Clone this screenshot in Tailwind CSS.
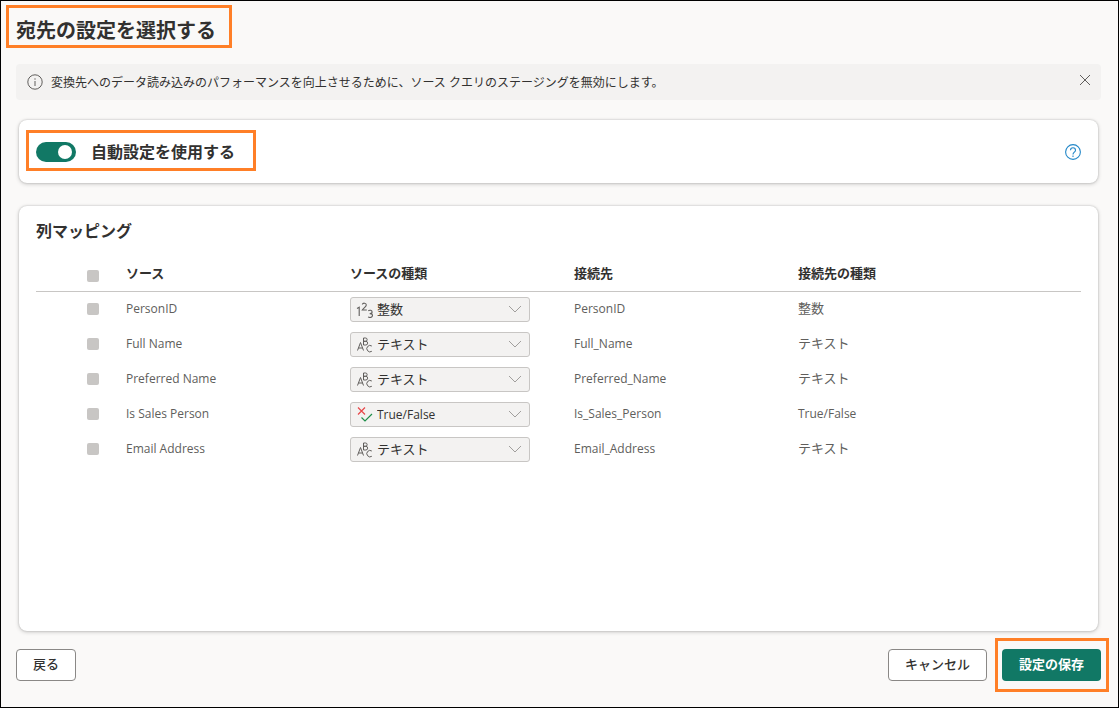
<!DOCTYPE html>
<html lang="ja">
<head>
<meta charset="utf-8">
<meta name="viewport" content="width=device-width, initial-scale=1">
<title>宛先の設定を選択する</title>
<script src="https://cdn.jsdelivr.net/npm/@tailwindcss/browser@4"></script>
</head>
<body class="flex min-h-screen flex-col border border-black bg-[#faf9f8] pr-[17px] pb-[26px] pl-[15px] font-['Open_Sans','Noto_Sans_CJK_JP',sans-serif] text-[13px] text-[#323130]">
<svg class="hidden" aria-hidden="true">
  <symbol id="chevron" viewBox="0 0 14 8"><path d="M1 1 7 7 13 1" fill="none" stroke="#a19f9d" stroke-width="1"/></symbol>
  <symbol id="abc" viewBox="0 0 16 16" fill="none" stroke="#605e5c" stroke-width="1">
    <path d="M.5 13.500 3.500 5.500 6.500 13.500M1.500 11h4M6.500 1v7h2.300a1.800 1.800 0 0 0 0-3.700h-2.300 2a1.600 1.600 0 0 0 0-3.300zM14.800 9a3.200 3.200 0 1 0 0 5.300"/>
  </symbol>
  <symbol id="num" viewBox="0 0 18 16" fill="none" stroke="#605e5c" stroke-width="1.100">
    <path d="M1 6.500 3.200 5.200v8.800M6.300 2.500C6.700.7 10.300.6 10.300 3c0 1.800-2.600 3-4 5h4.500M12.300 8.700c1.300-.9 3.800-.5 3.800 1.200 0 1.200-.9 1.700-2.400 1.700 1.600 0 2.800.5 2.800 1.900 0 2.100-2.800 2.400-4.400 1.400"/>
  </symbol>
  <symbol id="bool" viewBox="0 0 16 16" fill="none" stroke-width="1.200">
    <path d="M1 .5 8 7.500M8 .5 1 7.500" stroke="#e8484a"/><path d="M4.500 10.500 8 14 15 7" stroke="#1f8f4a"/>
  </symbol>
</svg>

<header class="flex h-[63px] items-center">
  <div class="relative pb-[3px]">
    <h1 class="text-[20px] leading-[28px] font-bold">宛先の設定を選択する</h1>
    <span class="pointer-events-none absolute -top-3 -right-[16px] bottom-0 -left-[10px] border-3 border-[#ff7f27]"></span>
  </div>
</header>

<div role="status" class="flex h-9 shrink-0 items-center rounded-sm bg-[#f3f2f1] pr-2 pl-[11px]">
  <svg class="mr-2 size-4 shrink-0" viewBox="0 0 16 16" fill="none" stroke="#605e5c"><circle cx="8" cy="8" r="7.200"/><path d="M8 7v5M8 4.300v1.400"/></svg>
  <p class="flex-1 pt-0.5 text-[12px] leading-4">変換先へのデータ読み込みのパフォーマンスを向上させるために、ソース クエリのステージングを無効にします。</p>
  <button type="button" aria-label="閉じる" class="mb-1 flex size-4 items-center justify-center"><svg class="size-3" viewBox="0 0 12 12" fill="none" stroke="#605e5c"><path d="m1 1 10 10M11 1 1 11"/></svg></button>
</div>

<section class="mx-[3px] mt-5 flex h-[63px] shrink-0 items-center justify-between rounded-lg bg-white px-[17px] shadow-[0_0_2px_rgba(0,0,0,0.2),0_1px_4px_rgba(0,0,0,0.2)]">
  <div class="relative">
    <label class="flex items-center gap-[15px] text-[16px] leading-[22px] font-bold">
      <span class="relative flex">
        <input type="checkbox" role="switch" checked class="peer h-5 w-10 appearance-none rounded-full bg-[#117865]">
        <span class="pointer-events-none absolute top-[3px] right-1 size-[14px] rounded-full bg-white"></span>
      </span>
      自動設定を使用する
    </label>
    <span class="pointer-events-none absolute -top-[11px] -right-[21px] -bottom-2 -left-[10px] border-3 border-[#ff7f27]"></span>
  </div>
  <button type="button" aria-label="ヘルプ" class="size-4"><svg class="size-4" viewBox="0 0 16 16" fill="none" stroke="#2488c8" stroke-width="1.100"><circle cx="8" cy="8" r="7.400"/><path d="M5.500 6.200c0-3.200 5-3.200 5 0 0 1.900-2.500 2-2.500 4.200M8 11.600v1.300"/></svg></button>
</section>

<section class="mx-[3px] mt-[23px] flex-1 rounded-lg bg-white px-[17px] pt-[14px] shadow-[0_0_2px_rgba(0,0,0,0.2),0_1px_4px_rgba(0,0,0,0.2)]">
  <h2 class="text-[16px] leading-[22px] font-bold">列マッピング</h2>
  <table class="mt-[14px] w-full table-fixed text-left text-[#605e5c]">
    <colgroup><col class="w-[90px]"><col class="w-56"><col class="w-56"><col class="w-56"><col></colgroup>
    <thead>
      <tr class="h-[35px] border-b border-[#c8c6c4] text-[#323130]">
        <th class="pt-1.5 pl-[51px]"><input type="checkbox" disabled aria-label="すべて選択" class="block size-3 appearance-none rounded-[2px] bg-[#c8c6c4]"></th>
        <th class="font-bold">ソース</th><th class="font-bold">ソースの種類</th><th class="font-bold">接続先</th><th class="font-bold">接続先の種類</th>
      </tr>
    </thead>
    <tbody>
      <tr class="h-[35px]">
        <td class="pl-[51px]"><input type="checkbox" disabled aria-label="PersonID を選択" class="block size-3 appearance-none rounded-[2px] bg-[#c8c6c4]"></td>
        <td class="text-[12px]">PersonID</td>
        <td class="pt-0.5"><div class="relative w-[180px] text-[#323130]"><select aria-label="PersonID の種類" class="block h-[25px] w-full appearance-none rounded-[3px] border border-[#c8c6c4] bg-[#f3f2f1] pl-[26px]"><option>整数</option></select><svg class="pointer-events-none absolute top-[5px] left-1.5 h-4 w-[18px]"><use href="#num"/></svg><svg class="pointer-events-none absolute top-2 right-2 h-2 w-[14px]"><use href="#chevron"/></svg></div></td>
        <td class="text-[12px]">PersonID</td><td>整数</td>
      </tr>
      <tr class="h-[35px]">
        <td class="pl-[51px]"><input type="checkbox" disabled aria-label="Full Name を選択" class="block size-3 appearance-none rounded-[2px] bg-[#c8c6c4]"></td>
        <td class="text-[12px]">Full Name</td>
        <td class="pt-0.5"><div class="relative w-[180px] text-[#323130]"><select aria-label="Full Name の種類" class="block h-[25px] w-full appearance-none rounded-[3px] border border-[#c8c6c4] bg-[#f3f2f1] pl-[26px]"><option>テキスト</option></select><svg class="pointer-events-none absolute top-[5px] left-[7px] size-4"><use href="#abc"/></svg><svg class="pointer-events-none absolute top-2 right-2 h-2 w-[14px]"><use href="#chevron"/></svg></div></td>
        <td class="text-[12px]">Full_Name</td><td>テキスト</td>
      </tr>
      <tr class="h-[35px]">
        <td class="pl-[51px]"><input type="checkbox" disabled aria-label="Preferred Name を選択" class="block size-3 appearance-none rounded-[2px] bg-[#c8c6c4]"></td>
        <td class="text-[12px]">Preferred Name</td>
        <td class="pt-0.5"><div class="relative w-[180px] text-[#323130]"><select aria-label="Preferred Name の種類" class="block h-[25px] w-full appearance-none rounded-[3px] border border-[#c8c6c4] bg-[#f3f2f1] pl-[26px]"><option>テキスト</option></select><svg class="pointer-events-none absolute top-[5px] left-[7px] size-4"><use href="#abc"/></svg><svg class="pointer-events-none absolute top-2 right-2 h-2 w-[14px]"><use href="#chevron"/></svg></div></td>
        <td class="text-[12px]">Preferred_Name</td><td>テキスト</td>
      </tr>
      <tr class="h-[35px]">
        <td class="pl-[51px]"><input type="checkbox" disabled aria-label="Is Sales Person を選択" class="block size-3 appearance-none rounded-[2px] bg-[#c8c6c4]"></td>
        <td class="text-[12px]">Is Sales Person</td>
        <td class="pt-0.5"><div class="relative w-[180px] text-[#323130]"><select aria-label="Is Sales Person の種類" class="block h-[25px] w-full appearance-none rounded-[3px] border border-[#c8c6c4] bg-[#f3f2f1] pl-[26px] text-[12px]"><option>True/False</option></select><svg class="pointer-events-none absolute top-[5px] left-[7px] size-4"><use href="#bool"/></svg><svg class="pointer-events-none absolute top-2 right-2 h-2 w-[14px]"><use href="#chevron"/></svg></div></td>
        <td class="text-[12px]">Is_Sales_Person</td><td class="text-[12px]">True/False</td>
      </tr>
      <tr class="h-[35px]">
        <td class="pl-[51px]"><input type="checkbox" disabled aria-label="Email Address を選択" class="block size-3 appearance-none rounded-[2px] bg-[#c8c6c4]"></td>
        <td class="text-[12px]">Email Address</td>
        <td class="pt-0.5"><div class="relative w-[180px] text-[#323130]"><select aria-label="Email Address の種類" class="block h-[25px] w-full appearance-none rounded-[3px] border border-[#c8c6c4] bg-[#f3f2f1] pl-[26px]"><option>テキスト</option></select><svg class="pointer-events-none absolute top-[5px] left-[7px] size-4"><use href="#abc"/></svg><svg class="pointer-events-none absolute top-2 right-2 h-2 w-[14px]"><use href="#chevron"/></svg></div></td>
        <td class="text-[12px]">Email_Address</td><td>テキスト</td>
      </tr>
    </tbody>
  </table>
</section>

<footer class="mt-[18px] flex items-center justify-between">
  <button type="button" class="h-8 rounded-sm border border-[#8a8886] bg-white px-4 font-medium">戻る</button>
  <div class="flex gap-[15px]">
    <button type="button" class="h-8 rounded-sm border border-[#8a8886] bg-white px-4 font-medium">キャンセル</button>
    <div class="relative">
      <button type="button" class="h-8 rounded-sm bg-[#117865] px-[17px] font-bold text-white">設定の保存</button>
      <span class="pointer-events-none absolute -top-[11px] -right-2 -bottom-[11px] -left-[7px] border-3 border-[#ff7f27]"></span>
    </div>
  </div>
</footer>
</body>
</html>
